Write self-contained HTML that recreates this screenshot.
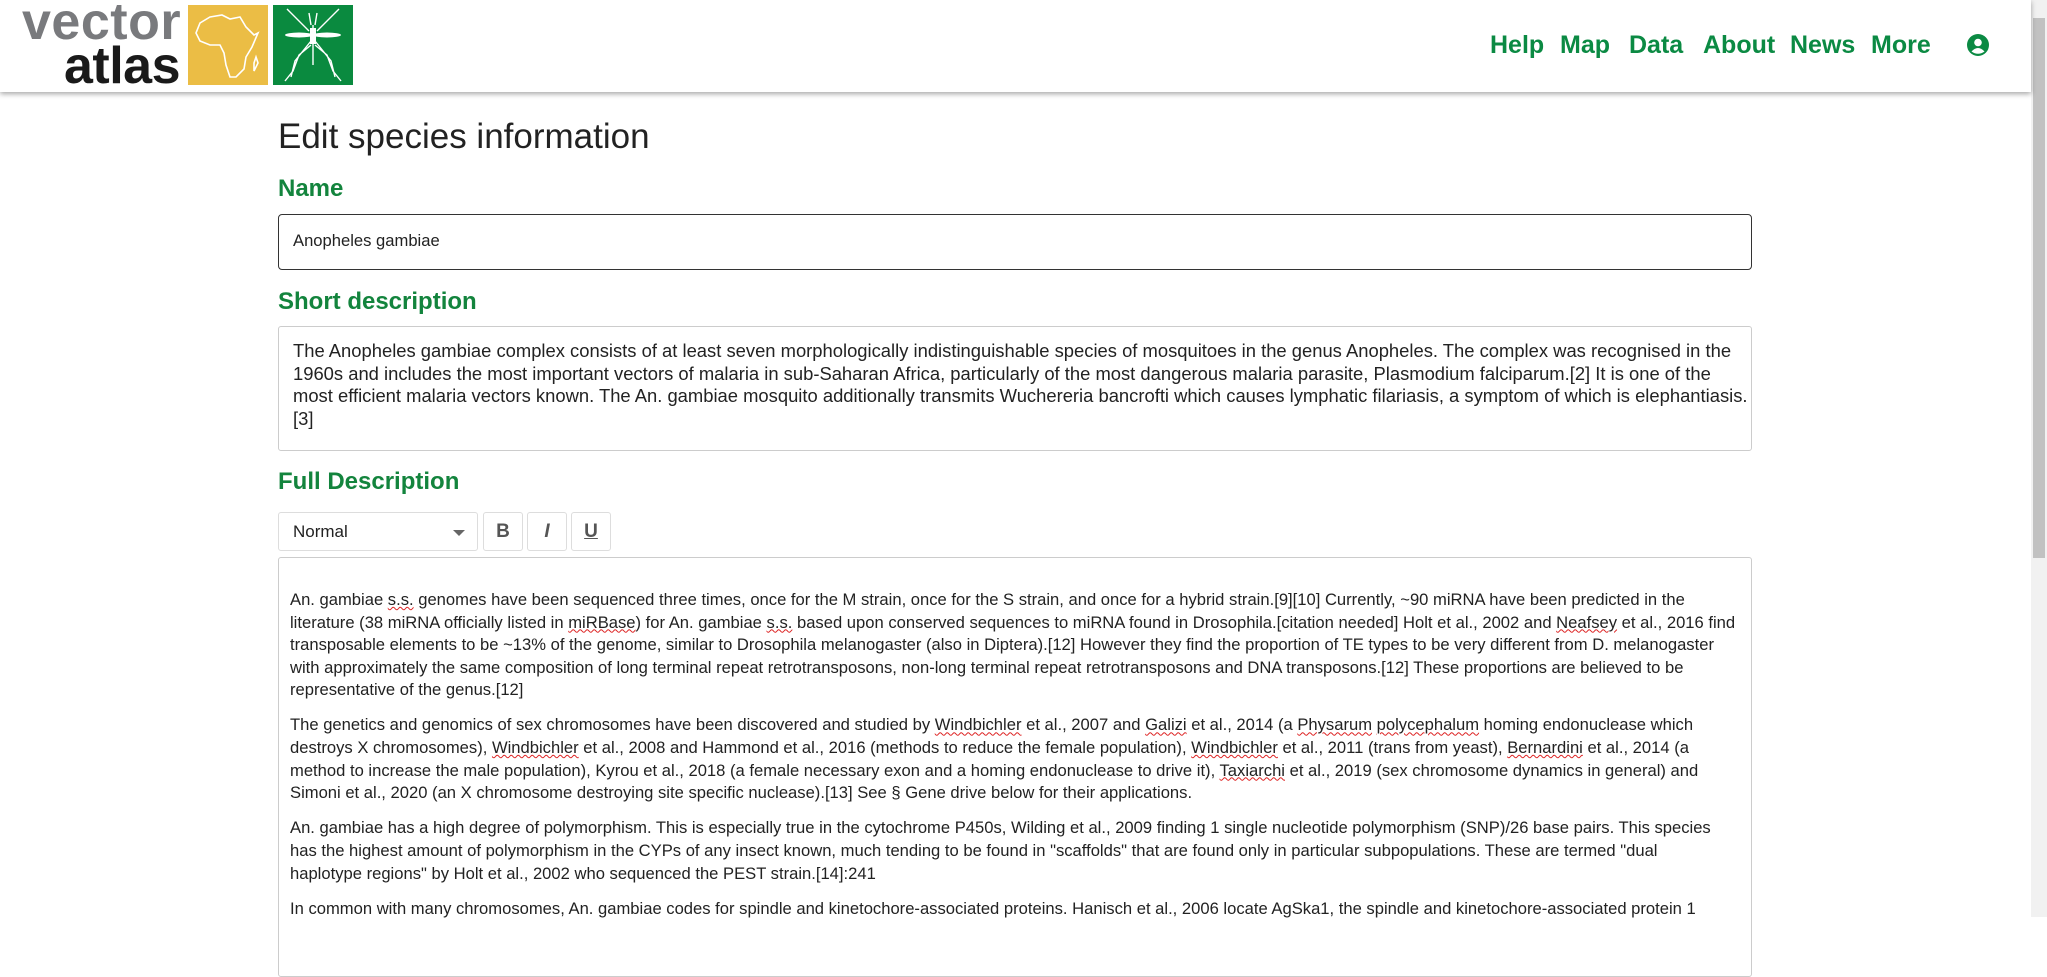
<!DOCTYPE html>
<html><head><meta charset="utf-8"><style>
*{box-sizing:border-box;margin:0;padding:0}
html,body{width:2047px;height:917px;overflow:hidden;background:#fff;font-family:"Liberation Sans",Arial,sans-serif;color:#222}
.hdr{position:absolute;left:0;top:0;width:2031px;height:92px;background:#fff;box-shadow:0 2px 5px rgba(0,0,0,.35);z-index:2}
.logo1{position:absolute;left:22px;top:-8px;font-size:52px;font-weight:bold;color:#797a7d;letter-spacing:0.5px}
.logo2{position:absolute;left:64px;top:36px;font-size:52px;font-weight:bold;color:#1a1a1a;letter-spacing:-0.5px}
.nav{position:absolute;top:31px;font-size:25px;font-weight:bold;color:#0b8a43}
.sb{position:absolute;left:2031px;top:0;width:16px;height:917px;background:#f1f1f1}
.sb div{position:absolute;left:2px;top:18px;width:12px;height:540px;background:#c1c1c1}
h1{position:absolute;left:278px;top:117px;font-size:35px;font-weight:normal;color:#222}
h2{position:absolute;left:278px;font-size:24px;font-weight:bold;color:#13843d}
.box{position:absolute;left:278px;width:1474px;border:1px solid #ccc;border-radius:3px}
.t{font-size:16.6px;line-height:22.6px;white-space:nowrap;color:#222}
.ed p{margin-bottom:12.5px}
.u{text-decoration:underline wavy #d22;text-decoration-thickness:1px}
.btn{position:absolute;top:512px;width:40px;height:39px;border:1px solid #ddd;border-radius:3px;text-align:center;line-height:38px;font-size:19px;color:#555;font-weight:bold}
</style></head><body>
<div class="hdr">
 <div class="logo1">vector</div>
 <div class="logo2">atlas</div>
 <svg style="position:absolute;left:188px;top:5px" width="80" height="80" viewBox="0 0 80 80"><rect width="80" height="80" fill="#ebbd45"/>
 <path d="M22 12 L34 10 L42 14 L52 12 L58 22 L66 30 L70 28 L64 42 L58 52 L56 64 L48 72 L42 72 L38 60 L36 48 L32 40 L22 40 L12 36 L8 28 L12 18 Z M66 58 L68 52 L70 58 L66 66 Z" fill="none" stroke="#fff" stroke-width="1.6"/></svg>
 <svg style="position:absolute;left:273px;top:5px" width="80" height="80" viewBox="0 0 80 80"><rect width="80" height="80" fill="#0a8a3f"/>
 <g stroke="#fff" stroke-width="1.4" fill="none"><path d="M40 20 L40 60 M36 8 L38 20 M44 8 L42 20 M14 4 L24 14 L36 26 M66 4 L56 14 L44 26 M38 40 L26 50 L20 66 L12 76 M42 40 L54 50 L60 66 L68 76 M38 36 L22 56 L18 72 M42 36 L58 56 L62 72"/></g>
 <ellipse cx="26" cy="30" rx="14" ry="2.5" fill="#fff"/><ellipse cx="54" cy="30" rx="14" ry="2.5" fill="#fff"/><rect x="37" y="23" width="6" height="16" fill="#fff"/></svg>
 <span class="nav" style="left:1490px">Help</span>
 <span class="nav" style="left:1560px">Map</span>
 <span class="nav" style="left:1629px">Data</span>
 <span class="nav" style="left:1703px">About</span>
 <span class="nav" style="left:1790px">News</span>
 <span class="nav" style="left:1871px">More</span>
 <svg style="position:absolute;left:1967px;top:34px" width="22" height="22" viewBox="0 0 22 22"><circle cx="11" cy="11" r="11" fill="#0b8a43"/><circle cx="11" cy="8.5" r="3.8" fill="#fff"/><path d="M4.5 17.5 Q11 10.5 17.5 17.5 Q11 22 4.5 17.5Z" fill="#fff"/></svg>
</div>
<div class="sb"><div></div></div>
<h1>Edit species information</h1>
<h2 style="top:175px">Name</h2>
<div class="box" style="top:214px;height:56px;border-color:#333;border-radius:4px"><div class="t" style="position:absolute;left:14px;top:15px">Anopheles gambiae</div></div>
<h2 style="top:288px">Short description</h2>
<div class="box" style="top:326px;height:125px"><div class="t" style="position:absolute;left:14px;top:13px;font-size:18.4px">
The Anopheles gambiae complex consists of at least seven morphologically indistinguishable species of mosquitoes in the genus Anopheles. The complex was recognised in the<br>
1960s and includes the most important vectors of malaria in sub-Saharan Africa, particularly of the most dangerous malaria parasite, Plasmodium falciparum.[2] It is one of the<br>
most efficient malaria vectors known. The An. gambiae mosquito additionally transmits Wuchereria bancrofti which causes lymphatic filariasis, a symptom of which is elephantiasis.<br>
[3]</div></div>
<h2 style="top:468px">Full Description</h2>
<div class="btn" style="left:278px;width:200px;text-align:left;padding-left:14px;font-weight:normal;font-size:17px;color:#222">Normal<span style="position:absolute;right:12px;top:17px;border:6px solid transparent;border-top-color:#666;border-bottom:0"></span></div>
<div class="btn" style="left:483px">B</div>
<div class="btn" style="left:527px;font-style:italic">I</div>
<div class="btn" style="left:571px;text-decoration:underline">U</div>
<div class="box ed" style="top:557px;height:420px"><div class="t" style="position:absolute;left:11px;top:31px">
<p>An. gambiae <span class="u">s.s.</span> genomes have been sequenced three times, once for the M strain, once for the S strain, and once for a hybrid strain.[9][10] Currently, ~90 miRNA have been predicted in the<br>
literature (38 miRNA officially listed in <span class="u">miRBase</span>) for An. gambiae <span class="u">s.s.</span> based upon conserved sequences to miRNA found in Drosophila.[citation needed] Holt et al., 2002 and <span class="u">Neafsey</span> et al., 2016 find<br>
transposable elements to be ~13% of the genome, similar to Drosophila melanogaster (also in Diptera).[12] However they find the proportion of TE types to be very different from D. melanogaster<br>
with approximately the same composition of long terminal repeat retrotransposons, non-long terminal repeat retrotransposons and DNA transposons.[12] These proportions are believed to be<br>
representative of the genus.[12]</p>
<p>The genetics and genomics of sex chromosomes have been discovered and studied by <span class="u">Windbichler</span> et al., 2007 and <span class="u">Galizi</span> et al., 2014 (a <span class="u">Physarum</span> <span class="u">polycephalum</span> homing endonuclease which<br>
destroys X chromosomes), <span class="u">Windbichler</span> et al., 2008 and Hammond et al., 2016 (methods to reduce the female population), <span class="u">Windbichler</span> et al., 2011 (trans from yeast), <span class="u">Bernardini</span> et al., 2014 (a<br>
method to increase the male population), Kyrou et al., 2018 (a female necessary exon and a homing endonuclease to drive it), <span class="u">Taxiarchi</span> et al., 2019 (sex chromosome dynamics in general) and<br>
Simoni et al., 2020 (an X chromosome destroying site specific nuclease).[13] See § Gene drive below for their applications.</p>
<p>An. gambiae has a high degree of polymorphism. This is especially true in the cytochrome P450s, Wilding et al., 2009 finding 1 single nucleotide polymorphism (SNP)/26 base pairs. This species<br>
has the highest amount of polymorphism in the CYPs of any insect known, much tending to be found in "scaffolds" that are found only in particular subpopulations. These are termed "dual<br>
haplotype regions" by Holt et al., 2002 who sequenced the PEST strain.[14]:241</p>
<p>In common with many chromosomes, An. gambiae codes for spindle and kinetochore-associated proteins. Hanisch et al., 2006 locate AgSka1, the spindle and kinetochore-associated protein 1</p>
</div></div>
</body></html>
